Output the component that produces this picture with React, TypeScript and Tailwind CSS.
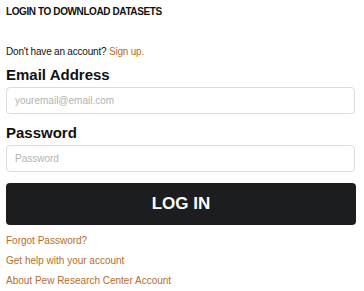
import React from 'react';

const links = ['Forgot Password?', 'Get help with your account', 'About Pew Research Center Account'];

export default function App() {
  return (
    <div className="w-[364px] h-[291px] bg-white px-[6px] pt-[7px] font-['Liberation_Sans',Arial,sans-serif] text-[#111]">
      <h2 className="text-[10px] leading-[10px] font-bold uppercase tracking-[-0.4px]">Login to download datasets</h2>

      <p className="mt-[29px] text-[10px] leading-[12px] tracking-[-0.2px]">
        Don't have an account? <a className="text-[#b86d2a]">Sign up.</a>
      </p>

      {/* Form */}
      <form className="mt-[8px] flex flex-col">
        <label className="text-[15px] leading-[18px] font-bold">Email Address</label>
        <input
          type="text"
          placeholder="youremail@email.com"
          className="mt-[3px] h-[27px] w-[349px] rounded-[4px] border border-[#dcdcdc] px-[8px] text-[10px] placeholder:text-[#b3b3b3] outline-none"
        />
        <label className="mt-[10px] text-[15px] leading-[18px] font-bold">Password</label>
        <input
          type="password"
          placeholder="Password"
          className="mt-[3px] h-[27px] w-[349px] rounded-[4px] border border-[#dcdcdc] px-[8px] text-[10px] placeholder:text-[#b3b3b3] outline-none"
        />
        <button
          type="button"
          className="mt-[11px] h-[42px] w-[350px] rounded-[4px] bg-[#1c1d1f] text-white text-[17px] font-bold uppercase"
        >
          Log in
        </button>
      </form>

      <div className="mt-[10px] flex flex-col gap-[8px]">
        {links.map((l) => (
          <a key={l} className="text-[10px] leading-[12px] text-[#b86d2a]">
            {l}
          </a>
        ))}
      </div>
    </div>
  );
}
